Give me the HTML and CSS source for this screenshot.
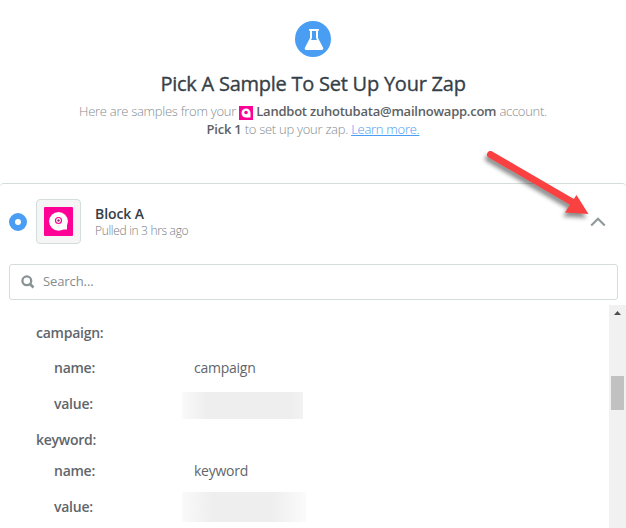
FILE: index.html
```
<!DOCTYPE html>
<html lang="en">
<head>
    <meta charset="UTF-8">
    <meta name="viewport" content="width=device-width, initial-scale=1.0">
    <title>Pick A Sample To Set Up Your Zap</title>
    <link rel="stylesheet" href="styles.css">
</head>
<body>
    <header class="intro">
        <svg class="flask" viewBox="0 0 36 36">
            <circle cx="18" cy="18" r="18" fill="#499df3"/>
            <path d="M15 9V17L10 26.500Q9 29 11.500 29H26.500Q29 29 28 26.500L23 17V9Z" fill="#fff"/>
            <path d="M17 10H21V17L22 19H16L17 17Z" fill="#499df3"/>
            <path d="M14.800 8.900H23.200" stroke="#fff" stroke-width="1.800" stroke-linecap="round"/>
        </svg>
        <h1>Pick A Sample To Set Up Your Zap</h1>
        <p>Here are samples from your <svg class="mini-logo" viewBox="0 0 28 28"><rect width="28" height="28" fill="#ff0096"/><circle cx="14" cy="14" r="9" fill="#fff"/><path d="M15 23H23V15Z" fill="#fff"/><circle cx="14" cy="13" r="3.500" fill="#ff0096"/></svg> <b>Landbot zuhotubata@mailnowapp.com</b> account.</p>
        <p><b>Pick 1</b> to set up your zap. <a href="#">Learn more.</a></p>
    </header>
    <main class="sample">
        <div class="sample-head">
            <span class="radio"></span>
            <div class="logo">
                <svg viewBox="0 0 29 29">
                    <rect width="29" height="29" rx="1" fill="#ff0096"/>
                    <circle cx="14.500" cy="14.300" r="9.400" fill="#fff"/>
                    <path d="M17 22.500H23V16Z" fill="#fff"/>
                    <circle cx="14.500" cy="13.500" r="3" fill="none" stroke="#ff0096" stroke-width="1.200"/>
                    <circle cx="14.500" cy="13.500" r="1.200" fill="#8c3468"/>
                    <path d="M12.800 18.500Q14.500 19.800 16.200 18.500" fill="none" stroke="#ddd" stroke-width=".8"/>
                </svg>
            </div>
            <div class="sample-title">
                <h2>Block A</h2>
                <p>Pulled in 3 hrs ago</p>
            </div>
            <svg class="chevron" viewBox="0 0 16 10">
                <path d="M1.200 8.500L8 1.700L14.800 8.500" fill="none" stroke="#92999c" stroke-width="2.200"/>
            </svg>
        </div>
        <div class="search">
            <svg viewBox="0 0 14 14">
                <circle cx="5.800" cy="5.800" r="4.400" fill="none" stroke="#899294" stroke-width="2.300"/>
                <path d="M9 9L12.500 12.500" stroke="#899294" stroke-width="2.500"/>
            </svg>
            <span>Search...</span>
        </div>
        <div class="panel">
            <dl class="fields">
                <div class="group">campaign:</div>
                <div class="field"><dt>name:</dt><dd>campaign</dd></div>
                <div class="field"><dt>value:</dt><dd class="hidden-value"></dd></div>
                <div class="group">keyword:</div>
                <div class="field second"><dt>name:</dt><dd>keyword</dd></div>
                <div class="field"><dt>value:</dt><dd class="hidden-value wide"></dd></div>
            </dl>
            <div class="scrollbar">
                <span class="up"></span>
                <span class="thumb"></span>
            </div>
        </div>
    </main>
    <svg class="arrow" viewBox="0 0 120 90">
        <path d="M10.500 14.500L93 62.500" stroke="#f94141" stroke-width="7" stroke-linecap="round"/>
        <path d="M96.500 55L108.500 74L85 72.500Z" fill="#f94141"/>
    </svg>
</body>
</html>
```

FILE: styles.css
```
* {
    box-sizing: border-box;
    margin: 0;
    padding: 0;
}
body {
    height: 528px;
    overflow: hidden;
    background: #fff;
    color: #5f666b;
    font-family: "Open Sans", sans-serif;
    font-size: 14px;
}
svg {
    display: block;
}
.intro {
    height: 183px;
    padding-top: 21px;
    text-align: center;
}
.flask {
    width: 36px;
    height: 36px;
    margin: 0 auto 13px;
}
.intro h1 {
    height: 32px;
    line-height: 28px;
    font-size: 20px;
    font-weight: 500;
    letter-spacing: -.24px;
    color: #354047;
    -webkit-text-stroke: .35px #354047;
}
.intro p {
    height: 18px;
    line-height: 18px;
    font-size: 13px;
    font-weight: 300;
    letter-spacing: -.27px;
    color: #858c8f;
    white-space: nowrap;
}
.intro b {
    font-weight: 600;
    letter-spacing: -.23px;
    color: #5d6163;
}
.intro a {
    color: #499df3;
}
.mini-logo {
    display: inline-block;
    width: 14px;
    height: 14px;
    vertical-align: -4px;
}
.sample {
    height: 345px;
    border-top: 1px solid #d4dddc;
    border-radius: 4px 4px 0 0;
}
.sample-head {
    display: flex;
    align-items: center;
    height: 80px;
    padding: 0 20px 5px 9px;
}
.radio {
    width: 18px;
    height: 18px;
    border: 6px solid #499df3;
    border-radius: 50%;
    background: #fff;
}
.logo {
    width: 45px;
    height: 45px;
    margin: 0 14px 0 9px;
    padding: 7px;
    border: 1px solid #d4dddc;
    border-radius: 4px;
    background: #f5f5f5;
}
.sample-title h2 {
    line-height: 18px;
    font-size: 14px;
    font-weight: 600;
    letter-spacing: -.1px;
    color: #354047;
}
.sample-title p {
    line-height: 15px;
    font-size: 12px;
    font-weight: 300;
    letter-spacing: -.32px;
    color: #747d81;
}
.chevron {
    width: 16px;
    height: 10px;
    margin-left: auto;
}
.search {
    display: flex;
    align-items: center;
    gap: 8px;
    height: 36px;
    margin: 0 8px 5px 9px;
    padding-left: 11px;
    border: 1px solid #d4dddc;
    border-radius: 3px;
    font-size: 13px;
    letter-spacing: -.1px;
    color: #858c8f;
}
.search span {
    margin-top: -2px;
}
.search svg {
    width: 14px;
    height: 14px;
}
.panel {
    display: flex;
    height: 223px;
}
.fields {
    flex: 1;
    padding: 10px 0 0 36px;
    letter-spacing: -.25px;
}
.group {
    height: 35px;
    line-height: 36px;
    font-weight: 600;
}
.field {
    display: flex;
    align-items: center;
    height: 36px;
    padding-left: 18px;
}
.field dt,
.field dd {
    margin-top: -2px;
}
.field.second {
    height: 35px;
    margin-top: -3px;
}
.field dt {
    width: 140px;
    font-weight: 600;
}
.field .hidden-value {
    width: 121px;
    height: 27px;
    margin: 3px 0 0 -12px;
    background: linear-gradient(90deg, #fafafa, #eee 20%, #eee 90%, #f3f3f3);
}
.field .hidden-value.wide {
    width: 124px;
    height: 30px;
    margin-top: 0;
    background: linear-gradient(90deg, #fafafa, #eee 25%, #eee 72%, #fbfbfb);
}
.scrollbar {
    width: 17px;
    padding: 6px 2px 0;
    background: #f1f1f1;
}
.up {
    display: block;
    width: 7px;
    height: 4px;
    margin: 0 0 61px 3px;
    background: #505050;
    clip-path: polygon(50% 0, 100% 100%, 0 100%);
}
.thumb {
    display: block;
    height: 34px;
    background: #c1c1c1;
}
/* callout pointing at the collapse button */
.arrow {
    position: absolute;
    left: 480px;
    top: 140px;
    width: 120px;
    height: 90px;
    filter: drop-shadow(-2px 4px 2px rgba(0, 0, 0, .45));
}
```
